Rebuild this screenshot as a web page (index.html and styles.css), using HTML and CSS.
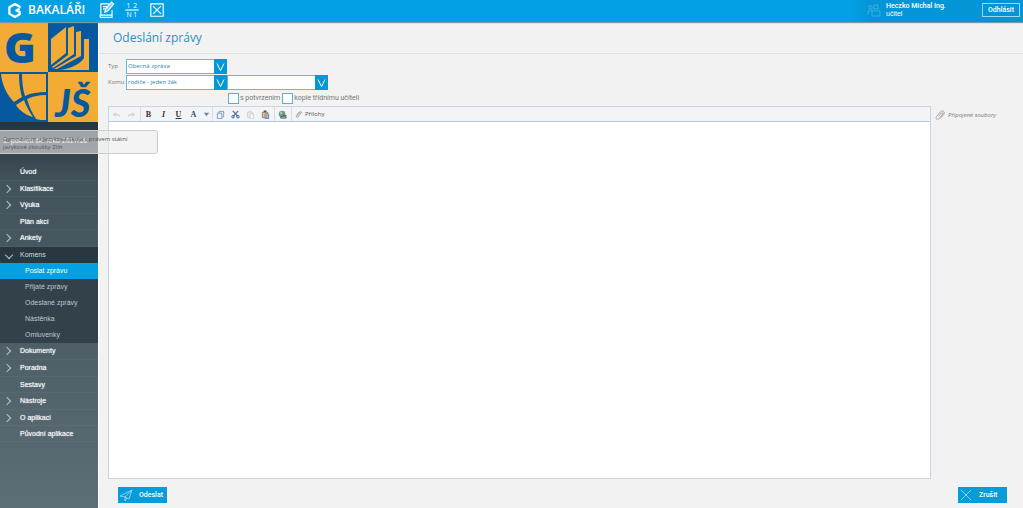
FILE: index.html
```html
<!DOCTYPE html>
<html lang="cs">
<head>
<meta charset="utf-8">
<title>Odeslání zprávy</title>
<link rel="stylesheet" href="styles.css">
</head>
<body>
<header class="topbar">
  <a class="brand" href="#">
    <svg class="brand-mark" viewBox="0 0 16 18"><path d="M13.500 6V5L8.500 2L2.500 5.500V12.500L8.500 16L13.500 13V10.500L10 9L13.500 7" fill="none" stroke="#fff" stroke-width="2.400" stroke-linejoin="round"/></svg>
    <span class="brand-name">BAKALÁŘI</span>
  </a>
  <nav class="quick">
    <button class="quick-btn" aria-label="Zápis"><svg viewBox="0 0 14 16"><path d="M9 2.500H1.500V12M1.500 12.500h10V8M1.500 12c-1 0-1 2.500 0 2.500h10v-2M3.500 5h4M3.500 7h2" fill="none" stroke="#fff"/><path d="M5 10l.8-3L11 1l2 1.800-5.200 6z" fill="#7fd0f5" stroke="#fff"/></svg></button>
    <button class="quick-btn" aria-label="Známky"><svg viewBox="0 0 14 16"><path d="M1 8h12" stroke="#fff"/><text x="2" y="6" class="quick-text">1</text><text x="8" y="6" class="quick-text">2</text><text x="2" y="14" class="quick-text">N</text><text x="8" y="14" class="quick-text">1</text></svg></button>
    <button class="quick-btn" aria-label="Absence"><svg viewBox="0 0 14 16"><path d="M1.500 2.500h11v11h-11zM3.500 4.500l7 7M10.500 4.500l-7 7" fill="none" stroke="#fff"/></svg></button>
  </nav>
  <div class="user">
    <svg class="user-icon" viewBox="0 0 14 14"><path d="M2 3h3v3H2zM7 2h4v4H7zM1 12V8h4M5 13V8h8v5z" fill="none" stroke="#36b0e4"/></svg>
    <div class="user-text"><span class="user-name">Heczko Michal Ing.</span><br>učitel</div>
    <button class="logout">Odhlásit</button>
  </div>
</header>
<div class="layout">
  <aside class="sidebar">
    <svg class="school-logo" viewBox="0 0 98 100">
      <rect width="98" height="100" fill="#f2ab35"/>
      <path d="M48 0h50v50H48z" fill="#07599f"/>
      <text x="4" y="41" class="logo-g">G</text>
      <g fill="#f2ab35"><path d="M51 17L66 5v26L51 43z"/><path d="M68 6l6-2v28L53 46l-1-1 16-12z"/><path d="M76 10l5-1v25L57 47l-3 0 22-13z"/><path d="M84 17h5v31H60c12-2 20-6 24-12z"/></g>
      <path d="M0 50h48v50H0z" fill="#07599f"/>
      <g fill="#f2ab35"><path d="M1 52h18c0 8 1 17 3 23l-8 5C7 73 2 63 1 52z"/><path d="M22 52h24v18c-8 0-15 1-21 4-2-6-3-14-3-22z"/><path d="M16 83l8-5c2 6 5 11 9 17-7-2-13-6-17-12z"/><path d="M27 77c5-2 11-4 19-4v25c-4 0-7 0-10-1-4-6-7-13-9-20z"/></g>
      <text x="55" y="95" class="logo-js">JŠ</text>
    </svg>
    <div class="term">1. pololetí šk. roku 2017/18
      <div class="school-tip">Gymnázium a Jazyková škola s právem státní jazykové zkoušky Zlín</div>
    </div>
    <ul class="menu">
      <li><a href="#">Úvod</a></li>
      <li><a class="more" href="#">Klasifikace</a></li>
      <li><a class="more" href="#">Výuka</a></li>
      <li><a href="#">Plán akcí</a></li>
      <li><a class="more" href="#">Ankety</a></li>
      <li class="opened"><a class="more down" href="#">Komens</a>
        <ul class="submenu">
          <li><a class="current" href="#">Poslat zprávu</a></li>
          <li><a href="#">Přijaté zprávy</a></li>
          <li><a href="#">Odeslané zprávy</a></li>
          <li><a href="#">Nástěnka</a></li>
          <li><a href="#">Omluvenky</a></li>
        </ul>
      </li>
      <li><a class="more" href="#">Dokumenty</a></li>
      <li><a class="more" href="#">Poradna</a></li>
      <li><a href="#">Sestavy</a></li>
      <li><a class="more" href="#">Nástroje</a></li>
      <li><a class="more" href="#">O aplikaci</a></li>
      <li><a href="#">Původní aplikace</a></li>
    </ul>
  </aside>
  <main class="main">
    <h1 class="title">Odeslání zprávy</h1>
    <form class="form">
      <div class="row">
        <label class="row-label" for="typ">Typ</label>
        <span class="combo"><select id="typ"><option>Obecná zpráva</option></select><svg class="combo-arrow" viewBox="0 0 13 14"><path d="M3 4l3.500 7L10 4" fill="none" stroke="#fff"/></svg></span>
      </div>
      <div class="row">
        <label class="row-label" for="komu">Komu</label>
        <span class="combo"><select id="komu"><option>rodiče - jeden žák</option></select><svg class="combo-arrow" viewBox="0 0 13 14"><path d="M3 4l3.500 7L10 4" fill="none" stroke="#fff"/></svg></span>
        <span class="combo"><select aria-label="Příjemce"><option></option></select><svg class="combo-arrow" viewBox="0 0 13 14"><path d="M3 4l3.500 7L10 4" fill="none" stroke="#fff"/></svg></span>
      </div>
      <div class="checks">
        <label class="check"><input type="checkbox">s potvrzením</label>
        <label class="check"><input type="checkbox">kopie třídnímu učiteli</label>
      </div>
      <div class="compose">
        <div class="editor">
          <div class="toolbar">
            <div class="group">
              <button type="button" class="tool" aria-label="Zpět"><svg viewBox="0 0 10 10"><path d="M4 2L1 5l3 3V6c2 0 4 0 5 2 0-3-2-4-5-4z" fill="#d4d6da"/></svg></button>
              <button type="button" class="tool" aria-label="Znovu"><svg viewBox="0 0 10 10"><path d="M6 2l3 3-3 3V6C4 6 2 6 1 8c0-3 2-4 5-4z" fill="#d4d6da"/></svg></button>
            </div>
            <div class="group">
              <button type="button" class="tool bold">B</button>
              <button type="button" class="tool italic">I</button>
              <button type="button" class="tool underline">U</button>
              <button type="button" class="tool color">A</button>
              <button type="button" class="tool caret" aria-label="Barva písma"><svg viewBox="0 0 10 10"><path d="M2 3h6L5 7z" fill="#71889a"/></svg></button>
            </div>
            <div class="group">
              <button type="button" class="tool" aria-label="Kopírovat"><svg viewBox="0 0 10 10"><path d="M3.500 1.500h5v6h-5z" fill="#f4f8fd" stroke="#7894bd"/><path d="M1.500 3.500h5v6h-5z" fill="#edf3fb" stroke="#7894bd"/></svg></button>
              <button type="button" class="tool" aria-label="Vyjmout"><svg viewBox="0 0 10 10"><path d="M2 1l5.500 6M8 1L2.500 7" stroke="#5b7a9d" stroke-width="1.500"/><circle cx="2.300" cy="7.500" r="1.400" fill="none" stroke="#2e5daa"/><circle cx="7.700" cy="7.500" r="1.400" fill="none" stroke="#2e5daa"/></svg></button>
              <button type="button" class="tool" aria-label="Vložit"><svg viewBox="0 0 10 10"><path d="M1.500 2.500h6v6h-6zM3 1.500h3" fill="#e6e6e6" stroke="#d2d2d2"/><path d="M4.500 4.500h4v5h-4z" fill="#fafafa" stroke="#d2d2d2"/></svg></button>
              <button type="button" class="tool" aria-label="Vložit z Wordu"><svg viewBox="0 0 10 10"><path d="M1.500 2.500h6v6h-6z" fill="#e4c18e" stroke="#917b62"/><path d="M3 1.500h3" stroke="#555" stroke-width="2"/><path d="M4.500 4.500h4v5h-4z" fill="#e8effa" stroke="#667b9a"/><path d="M5.500 6.500h2M5.500 8h2" stroke="#4d6994"/></svg></button>
            </div>
            <div class="group">
              <button type="button" class="tool" aria-label="Odkaz"><svg viewBox="0 0 10 10"><circle cx="4.500" cy="4.500" r="3.700" fill="#6ca36b"/><path d="M2 3l2-2 1 3-2 1z" fill="#a5c8e5"/><path d="M3 7.500h6v1.500H3zM5 6h4v1" fill="#e2e8ed" stroke="#46575d"/></svg></button>
            </div>
            <button type="button" class="attach"><svg viewBox="0 0 10 10"><path d="M3 7l3.500-4.500c1-1 2 0 1.300 1L4 8.500C2.500 10 .7 8.500 2 6.800L5.500 2" fill="none" stroke="#777" stroke-width=".8"/></svg>Přílohy</button>
          </div>
          <textarea class="body-text" aria-label="Text zprávy"></textarea>
        </div>
        <div class="files"><svg viewBox="0 0 10 10"><path d="M3.500 6.500L6.500 3c1-1 2 .2 1.200 1.200L4.300 8.500C2.500 10.300 0 8.500 1.500 6.500L5.500 1.700C7.700-.5 10.500 2 8.800 4.200L5.500 8.300" fill="none" stroke="#888" stroke-width=".7"/></svg>Připojené soubory</div>
      </div>
      <div class="actions">
        <button type="button" class="action"><svg viewBox="0 0 14 14"><path d="M1 8L13 2l-3 9-4-2zM13 2L6 9v4l2-3" fill="none" stroke="#a6dcf5" stroke-width=".8"/></svg>Odeslat</button>
        <button type="button" class="action"><svg viewBox="0 0 14 14"><path d="M2 2l10 10M12 2L2 12" stroke="#8ed3f2"/></svg>Zrušit</button>
      </div>
    </form>
  </main>
</div>
</body>
</html>
```
FILE: styles.css
```css
* { box-sizing: border-box; }
body { margin: 0; height: 100vh; display: flex; flex-direction: column; background: #f2f2f2; color: #777; font: 7px/8px "Open Sans", sans-serif; }
button { margin: 0; padding: 0; border: 0; background: none; color: inherit; font: inherit; }
a { color: inherit; text-decoration: none; }
svg { display: block; flex: none; }

.topbar { display: flex; align-items: flex-start; height: 22px; background: #03a0e3; color: #fff; box-shadow: 0 1px 1px #7799aa; z-index: 1; flex: none; }
.brand { display: flex; align-items: center; gap: 6px; padding-left: 7px; width: 99px; height: 20px; }
.brand-mark { width: 15px; height: 17px; }
.brand-name { font: 600 12px/18px "Open Sans", sans-serif; }
.quick { display: flex; gap: 9px; height: 20px; align-items: center; }
.quick-btn { width: 16px; }
.quick-btn svg { width: 16px; height: 18px; }
.quick-text { font: 6px "Open Sans", sans-serif; fill: #fff; }
.user { display: flex; align-items: center; margin-left: auto; width: 171px; height: 22px; padding: 0 3px 2px 15px; background: linear-gradient(90deg, #03a0e3, #0395d5 20px); font: 7px/8px "Liberation Sans", sans-serif; }
.user-icon { width: 14px; height: 14px; margin-right: 5px; }
.user-text { white-space: nowrap; }
.user-name { font: 500 7px/8px Roboto, sans-serif; }
.logout { margin-left: auto; width: 38px; height: 14px; border: 1px solid #9bd7f1; font: 500 7px/12px Roboto, sans-serif; }

.layout { flex: 1; display: flex; min-height: 0; }
.sidebar { width: 98px; flex: none; background: linear-gradient(#28343c 100px, #42535b 160px, #4d5e67 320px, #5d6e76); color: #f4f7f8; font: 7px/16px "Liberation Sans", sans-serif; }
.school-logo { width: 98px; height: 100px; }
.logo-g { font: 800 43px "Open Sans", sans-serif; fill: #07599f; }
.logo-js { font: italic 900 38px Lato, sans-serif; fill: #07599f; }
.term { position: relative; height: 42px; padding: 11px 3px 0; color: #fff; white-space: nowrap; }
.school-tip { position: absolute; left: -2px; top: 8px; width: 160px; height: 24px; padding: 4px 16px 0 4px; border: 1px solid #ccc; border-radius: 3px; background: rgb(235 235 235 / 60%); color: #555; font: 6px/8px "Open Sans", sans-serif; white-space: normal; z-index: 2; }
.menu, .submenu { list-style: none; margin: 0; padding: 0; }
.menu a { display: flex; align-items: center; height: 17px; padding-left: 20px; border-bottom: 1px solid rgb(255 255 255 / 4%); text-shadow: 0 0 1px #dde3e6; }
.menu > li:nth-child(even) > a, .menu > li:nth-child(11) > a { height: 16px; }
.menu > li:nth-child(8) > a, .menu > li:nth-child(10) > a { height: 17px; }
.menu > li:nth-child(9) > a { height: 16px; }
.menu a.more { position: relative; }
.menu a.more::before { content: ""; position: absolute; left: 4px; top: 5px; width: 5px; height: 5px; border: solid #b9c4c9; border-width: 1px 1px 0 0; transform: rotate(45deg); }
.menu a.down::before { left: 6px; transform: rotate(135deg); }
.menu .opened a { height: 16px; border: 0; color: #bdc7cc; text-shadow: none; }
.menu .opened > a { background: #2b373e; color: #d5dcdf; }
.submenu { background: #33424a; }
.menu .submenu a { padding-left: 25px; }
.menu .submenu a.current { background: #03a0e3; color: #fff; }

.main { flex: 1; min-width: 0; display: flex; flex-direction: column; border-left: 1px solid #fff; }
.title { margin: 0; height: 32px; padding-left: 14px; border-bottom: 1px solid #e2e2e2; color: #2d91bd; font: 400 12px/32px "Open Sans", sans-serif; }
.form { flex: 1; min-height: 0; display: flex; flex-direction: column; padding: 4px 16px 5px 9px; }
.row { display: flex; align-items: center; height: 16px; }
.row-label { width: 18px; white-space: nowrap; font-size: 6px; }
.combo { position: relative; width: 101px; height: 15px; }
.combo select { width: 100%; height: 15px; padding: 0 14px 0 1px; border: 1px solid #69b7dc; border-radius: 0; appearance: none; background: #fff; color: #2785b5; font: 6px/13px "Open Sans", sans-serif; }
.combo-arrow { position: absolute; right: 0; top: 0; width: 13px; height: 15px; background: #0399d8; pointer-events: none; }
.checks { display: flex; gap: 2px; height: 16px; padding: 2px 0 0 120px; }
.check { display: flex; align-items: center; gap: 1px; height: 12px; font-family: Roboto, sans-serif; }
.check input { appearance: none; width: 11px; height: 11px; margin: 0; border: 1px solid #55b1dc; background: #fff; }
.compose { flex: 1; min-height: 0; display: flex; }
.editor { flex: 1; display: flex; flex-direction: column; border: 1px solid #c9d5e2; }
.toolbar { display: flex; height: 15px; border-bottom: 1px solid #adcce2; background: #f3f4f6; }
.group { display: flex; padding-right: 1px; border-right: 1px solid #d7dde3; }
.tool { width: 15px; height: 14px; display: grid; place-items: center; color: #333; }
.tool svg { width: 9px; height: 9px; }
.bold { font: 700 8px "Liberation Serif", serif; }
.italic { font: italic 700 8px "Liberation Serif", serif; }
.underline { font: 700 8px "Liberation Serif", serif; text-decoration: underline; }
.color { font: 700 8px "Liberation Serif", serif; color: #2a4a75; }
.caret { width: 10px; }
.attach { display: flex; align-items: center; gap: 2px; padding-left: 3px; color: #555; font-size: 6px; }
.attach svg { width: 8px; height: 8px; }
.body-text { flex: 1; width: 100%; border: 0; resize: none; background: #fff; }
.files { display: flex; gap: 3px; align-items: center; width: 76px; height: 18px; padding-left: 4px; flex: none; white-space: nowrap; font-size: 6px; font-style: italic; }
.files svg { width: 10px; height: 10px; }
.actions { display: flex; justify-content: space-between; padding: 8px 0 0 10px; }
.action { display: flex; align-items: center; width: 49px; height: 16px; padding-left: 1px; gap: 6px; background: #049cda; color: #fff; font: 500 7px/16px Roboto, sans-serif; }
.action svg { width: 14px; height: 14px; }
```
